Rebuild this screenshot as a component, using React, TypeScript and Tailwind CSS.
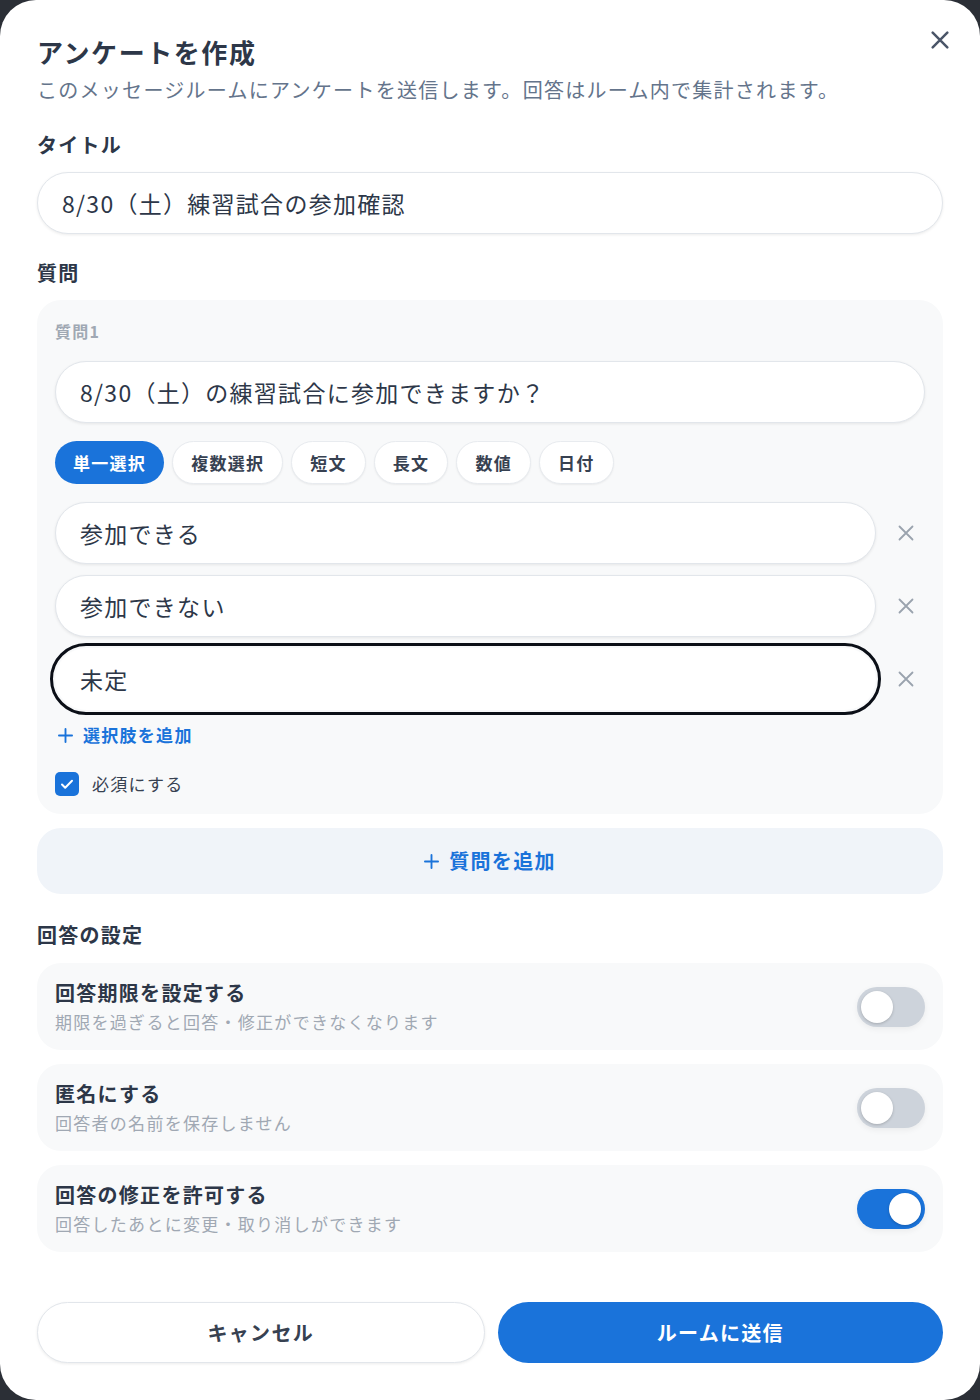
import { useState } from "react";

const BLUE = "bg-[#1a73da]";

function CrossIcon({ className, size = 16, stroke = 1.8 }: { className?: string; size?: number; stroke?: number }) {
  return (
    <svg width={size} height={size} viewBox="0 0 16 16" fill="none" className={className}>
      <path d="M1.5 1.5L14.5 14.5M14.5 1.5L1.5 14.5" stroke="currentColor" strokeWidth={stroke} strokeLinecap="round" />
    </svg>
  );
}

function PlusIcon({ className }: { className?: string }) {
  return (
    <svg width="15" height="15" viewBox="0 0 16 16" fill="none" className={className}>
      <path d="M8 1v14M1 8h14" stroke="currentColor" strokeWidth="2" strokeLinecap="round" />
    </svg>
  );
}

function Toggle({ on }: { on: boolean }) {
  return (
    <div
      className={`flex h-[40px] w-[68px] shrink-0 items-center rounded-full px-[4px] ${
        on ? "justify-end bg-[#1a73da]" : "justify-start bg-[#cdd3db]"
      } shadow-[0_2px_6px_rgba(0,0,0,0.06)]`}
    >
      <div className="h-[32px] w-[32px] rounded-full bg-white shadow-[0_1px_3px_rgba(0,0,0,0.2)]" />
    </div>
  );
}

const types = ["単一選択", "複数選択", "短文", "長文", "数値", "日付"];
const options = ["参加できる", "参加できない", "未定"];

const settings = [
  { title: "回答期限を設定する", sub: "期限を過ぎると回答・修正ができなくなります", on: false },
  { title: "匿名にする", sub: "回答者の名前を保存しません", on: false },
  { title: "回答の修正を許可する", sub: "回答したあとに変更・取り消しができます", on: true },
];

export default function App() {
  const [active] = useState(0);

  return (
    <div className="min-h-[1400px] bg-[#2b2f36] font-['Noto_Sans_CJK_JP','Noto_Sans',sans-serif] tracking-[0.08em] text-[#2d3748]">
      <div className="relative flex h-[1400px] flex-col rounded-[36px] bg-white px-[37px] pt-[34px] pb-[37px]">
        <button className="absolute top-[31px] right-[31px] text-[#4a5568]">
          <CrossIcon size={18} stroke={2.2} />
        </button>

        <h1 className="text-[26px] leading-[36px] font-bold tracking-[0.06em]">アンケートを作成</h1>
        <p className="mt-[2px] text-[20px] leading-[36px] text-[#64748b]">
          このメッセージルームにアンケートを送信します。回答はルーム内で集計されます。
        </p>

        <div className="mt-[19px] text-[20px] leading-[36px] font-bold">タイトル</div>
        <div className="mt-[9px] flex h-[62px] items-center rounded-full border border-[#e2e6eb] bg-white px-[24px] text-[23px] text-[#2d3748] shadow-[0_1px_3px_rgba(0,0,0,0.08)]">
          8/30（土）練習試合の参加確認
        </div>

        <div className="mt-[21px] text-[20px] leading-[36px] font-bold">質問</div>
        <div className="mt-[9px] flex flex-col rounded-[24px] bg-[#f8f9fa] px-[18px] pt-[18px] pb-[18px]">
          <div className="text-[16px] leading-[26px] font-bold text-[#a0a8b3]">質問1</div>
          <div className="mt-[17px] flex h-[62px] items-center rounded-full border border-[#e2e6eb] bg-white px-[24px] text-[23px] shadow-[0_1px_3px_rgba(0,0,0,0.08)]">
            8/30（土）の練習試合に参加できますか？
          </div>

          <div className="mt-[18px] flex gap-[8px]">
            {types.map((t, i) => (
              <div
                key={t}
                className={`flex h-[43px] items-center rounded-full px-[18px] text-[17px] font-bold ${
                  i === active
                    ? `${BLUE} text-white`
                    : "border border-[#e8ebef] bg-white text-[#374151] shadow-[0_1px_2px_rgba(0,0,0,0.06)]"
                }`}
              >
                {t}
              </div>
            ))}
          </div>

          <div className="mt-[18px] flex flex-col gap-[11px]">
            {options.map((o, i) => (
              <div key={o} className="flex items-center">
                <div
                  className={`flex h-[62px] flex-1 items-center rounded-full bg-white px-[24px] text-[23px] ${
                    i === 2
                      ? "border border-white outline-[3px] outline-offset-[2px] outline-[#0b0f17] outline-solid"
                      : "border border-[#e2e6eb] shadow-[0_1px_3px_rgba(0,0,0,0.08)]"
                  }`}
                >
                  {o}
                </div>
                <button className="mr-[7px] ml-[18px] flex h-[24px] w-[24px] items-center justify-center text-[#9aa3ae]">
                  <CrossIcon size={16} stroke={1.8} />
                </button>
              </div>
            ))}
          </div>

          <button className="mt-[12px] flex h-[26px] items-center gap-[10px] pl-[3px] text-[17px] font-bold text-[#1a73da]">
            <PlusIcon />
            選択肢を追加
          </button>

          <label className="mt-[24px] flex h-[24px] items-center gap-[13px] text-[17px] text-[#374151]">
            <span className={`flex h-[24px] w-[24px] items-center justify-center rounded-[5px] ${BLUE}`}>
              <svg width="16" height="16" viewBox="0 0 16 16" fill="none">
                <path d="M3 8.5l3.2 3.2L13 4.8" stroke="white" strokeWidth="2" strokeLinecap="round" strokeLinejoin="round" />
              </svg>
            </span>
            必須にする
          </label>
        </div>

        <button className="mt-[14px] flex h-[66px] items-center justify-center gap-[10px] rounded-[24px] bg-[#f0f4f9] text-[20px] font-bold text-[#1a73da]">
          <PlusIcon />
          質問を追加
        </button>

        <div className="mt-[23px] text-[20px] leading-[36px] font-bold">回答の設定</div>
        <div className="mt-[10px] flex flex-col gap-[14px]">
          {settings.map((s) => (
            <div key={s.title} className="flex h-[87px] items-center justify-between rounded-[24px] bg-[#f8f9fa] pr-[18px] pl-[18px]">
              <div className="flex flex-col">
                <div className="text-[20px] leading-[28px] font-bold">{s.title}</div>
                <div className="mt-[3px] text-[17px] leading-[24px] text-[#a0a8b3]">{s.sub}</div>
              </div>
              <Toggle on={s.on} />
            </div>
          ))}
        </div>

        <div className="mt-auto flex gap-[13px]">
          <button className="h-[61px] flex-1 rounded-full border border-[#e2e6eb] bg-white text-[20px] font-bold text-[#374151] shadow-[0_1px_3px_rgba(0,0,0,0.08)]">
            キャンセル
          </button>
          <button className={`h-[61px] flex-1 rounded-full ${BLUE} text-[20px] font-bold text-white`}>
            ルームに送信
          </button>
        </div>
      </div>
    </div>
  );
}
